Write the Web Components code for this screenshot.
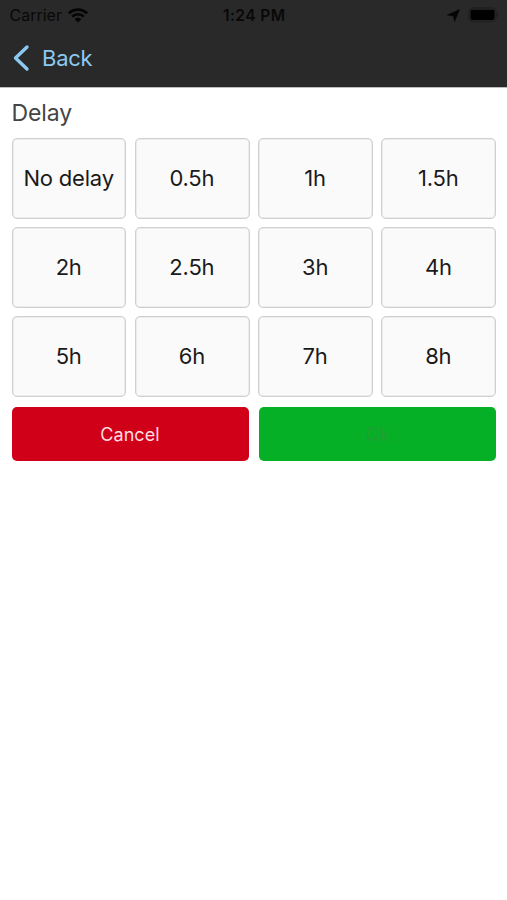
<!DOCTYPE html>
<html lang="en">
<head>
<meta charset="utf-8">
<title>Delay</title>
<style>
html, body { margin: 0; background: #fff; }
body { font-family: Inter, "Liberation Sans", sans-serif; }
</style>
</head>
<body>
<delay-screen></delay-screen>
<script>
class BaseElement extends HTMLElement {
  connectedCallback() {
    if (!this.shadowRoot) this.attachShadow({ mode: "open" }).innerHTML = this.constructor.markup;
  }
}

class StatusBar extends BaseElement {
  static markup = `
    <style>
      :host { display: grid; grid-template-columns: 1fr auto 1fr; align-items: center; height: 30px; padding: 0 8px 0 9.5px; color: #080808; font-size: 16px; line-height: 30px; }
      .left, .right { display: flex; align-items: center; }
      .left { gap: 6px; letter-spacing: 0; }
      .right { justify-content: flex-end; gap: 8px; }
      .time { font-weight: 600; font-size: 15.5px; letter-spacing: .45px; padding-top: 1px; line-height: 29px; }
      svg { display: block; }
    </style>
    <div class="left"><span>Carrier</span>
      <svg width="20" height="15" viewBox="0 0 20 15" fill="none" stroke="#050505">
        <path d="M.9 5.3a12.9 12.9 0 0 1 18.2 0" stroke-width="2.7"/>
        <path d="M4.2 8.7a8.2 8.2 0 0 1 11.6 0" stroke-width="2.6"/>
        <path d="M6.7 11.2a4.7 4.7 0 0 1 6.6 0L10 14.5z" fill="#050505" stroke="none"/>
      </svg>
    </div>
    <span class="time">1:24 PM</span>
    <div class="right">
      <svg width="13" height="13" viewBox="0 0 13 13"><path d="M12.5.5 7.6 12.5 6.4 7 .4 6z" fill="#050505" stroke="#050505" stroke-width=".5"/></svg>
      <svg width="31" height="16" viewBox="0 0 31 16">
        <rect x="1" y="1" width="27" height="13.5" rx="4" fill="none" stroke="#1f1f1f" stroke-width="1.3"/>
        <rect x="2.5" y="2.7" width="24" height="10.2" rx="1.8" fill="#000"/>
        <path d="M29 5.3q2.5 2.4 0 4.8z" fill="#1b1b1b"/>
      </svg>
    </div>`;
}

class BackButton extends BaseElement {
  static markup = `
    <style>
      :host { display: flex; align-items: center; height: 55px; padding-left: 12px; gap: 12px; color: #8bc9f3; font-size: 22px; }
      svg { display: block; }
      span { letter-spacing: -.25px; }
    </style>
    <svg width="18" height="28" viewBox="0 0 18 28" fill="none" stroke="currentColor" stroke-width="3.4" stroke-linecap="round" stroke-linejoin="round"><path d="M15 3 3.5 14 15 25"/></svg>
    <span><slot></slot></span>`;
}

class DelayOption extends BaseElement {
  static markup = `
    <style>
      :host { display: flex; align-items: center; justify-content: center; box-sizing: border-box; padding: 0 .5px .6px 0; border: 1px solid #d0d0d0; box-shadow: inset 0 0 0 .5px #dedede; border-radius: 5px; background: #fafafa; color: #1a1a1a; font-size: 22px; line-height: 26px; letter-spacing: -.2px; white-space: nowrap; }
    </style>
    <slot></slot>`;
}

class ActionButton extends BaseElement {
  static markup = `
    <style>
      :host { display: flex; align-items: center; justify-content: center; height: 54px; border-radius: 5px; background: #d00019; color: #ffdce0; font-size: 18px; letter-spacing: .1px; }
      :host([kind="confirm"]) { background: #06b026; color: #229d35; }
    </style>
    <slot></slot>`;
}

class DelayScreen extends BaseElement {
  static markup = `
    <style>
      :host { display: block; height: 900px; overflow: hidden; background: #fff; }
      header { height: 87px; background: #292929; border-bottom: 1px solid #bdbdbd; box-sizing: content-box; }
      main { padding: 10px 11px 0 11.5px; }
      h1 { margin: 0; height: 40px; line-height: 31px; font-size: 23px; font-weight: 400; letter-spacing: -.1px; color: #444; }
      .options { display: grid; grid-template-columns: repeat(4, 1fr); grid-auto-rows: 80.6px; gap: 8.4px; }
      .actions { display: grid; grid-template-columns: 1fr 1fr; gap: 10.5px; margin-top: 10.5px; }
    </style>
    <header><status-bar></status-bar><back-button>Back</back-button></header>
    <main>
      <h1>Delay</h1>
      <div class="options">
        ${["No delay", "0.5h", "1h", "1.5h", "2h", "2.5h", "3h", "4h", "5h", "6h", "7h", "8h"].map(t => `<delay-option>${t}</delay-option>`).join("")}
      </div>
      <div class="actions"><action-button>Cancel</action-button><action-button kind="confirm">Ok</action-button></div>
    </main>`;
}

customElements.define("status-bar", StatusBar);
customElements.define("back-button", BackButton);
customElements.define("delay-option", DelayOption);
customElements.define("action-button", ActionButton);
customElements.define("delay-screen", DelayScreen);
</script>
</body>
</html>
